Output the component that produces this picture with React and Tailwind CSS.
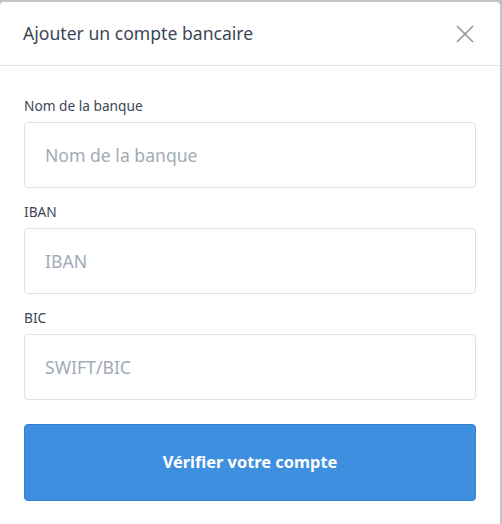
import React from "react";

const fields = [
  { label: "Nom de la banque", placeholder: "Nom de la banque" },
  { label: "IBAN", placeholder: "IBAN" },
  { label: "BIC", placeholder: "SWIFT/BIC" },
];

function CloseIcon() {
  return (
    <svg width="18" height="18" viewBox="0 0 18 18" fill="none" stroke="#8c96a3" strokeWidth="1.6">
      <path d="M1 1L17 17M17 1L1 17" />
    </svg>
  );
}

export default function App() {
  return (
    <div className="h-[524px] w-[502px] overflow-hidden bg-[#bfc4ca] pt-[2px] pr-[2px]" style={{ fontFamily: "'Noto Sans', sans-serif" }}>
      <div className="h-[530px] rounded-t-[4px] bg-white">
        {/* Header */}
        <div className="flex h-[64px] items-center justify-between border-b border-[#dde2e8] pl-[23px] pr-[26px]">
          <h2 className="text-[17.6px] text-[#3b4757]">Ajouter un compte bancaire</h2>
          <CloseIcon />
        </div>

        {/* Form */}
        <div className="px-[24px] pt-[32px]">
          {fields.map((f) => (
            <div key={f.label} className="mb-[16px]">
              <div className="mb-[8px] text-[13.7px] leading-[16px] text-[#3b4757]">{f.label}</div>
              <input
                className="h-[66px] w-full rounded-[4px] border border-[#dde2e8] px-[20px] text-[17.6px] text-[#3b4757] outline-none placeholder:text-[#a3abb6]"
                placeholder={f.placeholder}
              />
            </div>
          ))}
          <button className="mt-[8px] h-[77px] w-full rounded-[4px] border border-[#3380d0] bg-[#3e8fdf] text-[16.4px] font-bold text-white">
            Vérifier votre compte
          </button>
        </div>
      </div>
    </div>
  );
}
